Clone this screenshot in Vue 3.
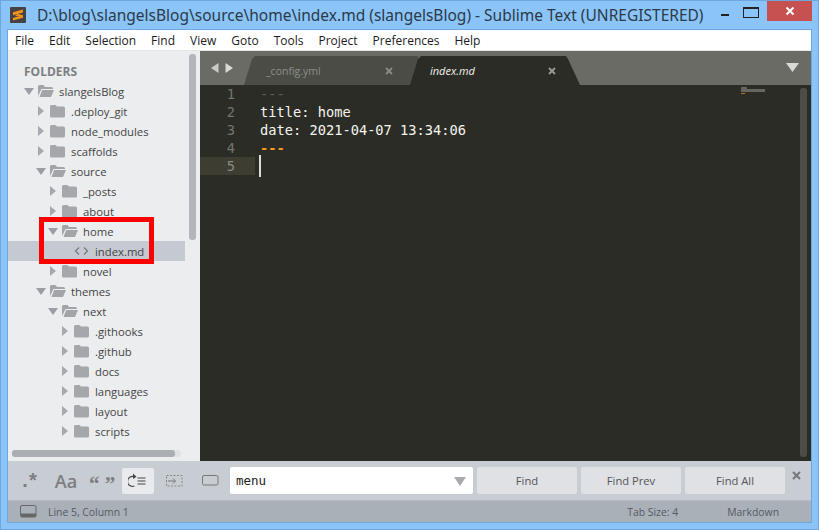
<script setup>
const menu = ['File', 'Edit', 'Selection', 'Find', 'View', 'Goto', 'Tools', 'Project', 'Preferences', 'Help']
const tree = [
  { name: 'slangelsBlog', d: 0, open: true },
  { name: '.deploy_git', d: 1 },
  { name: 'node_modules', d: 1 },
  { name: 'scaffolds', d: 1 },
  { name: 'source', d: 1, open: true },
  { name: '_posts', d: 2 },
  { name: 'about', d: 2 },
  { name: 'home', d: 2, open: true },
  { name: 'index.md', d: 3, file: true, selected: true },
  { name: 'novel', d: 2 },
  { name: 'themes', d: 1, open: true },
  { name: 'next', d: 2, open: true },
  { name: '.githooks', d: 3 },
  { name: '.github', d: 3 },
  { name: 'docs', d: 3 },
  { name: 'languages', d: 3 },
  { name: 'layout', d: 3 },
  { name: 'scripts', d: 3 }
]
const lines = [
  { n: 1, text: '---', cls: 'dim' },
  { n: 2, text: 'title: home', cls: '' },
  { n: 3, text: 'date: 2021-04-07 13:34:06', cls: '' },
  { n: 4, text: '---', cls: 'orange' },
  { n: 5, text: '', cls: '', active: true }
]
</script>

<template>
  <div class="window">
    <header class="titlebar">
      <svg class="logo" width="16" height="16" viewBox="0 0 16 16">
        <rect width="16" height="16" rx="1" fill="#444341" />
        <path d="M3 5.300 13 2.500v3L3 8.300zM3 8.200 13 10.800 3 13.500v-2.600l5-1.300-5-1.400zM8 7l5 1.300v2.500L5 8.500z" fill="#f5921e" />
      </svg>
      <span class="title">D:\blog\slangelsBlog\source\home\index.md (slangelsBlog) - Sublime Text (UNREGISTERED)</span>
      <div class="controls">
        <span class="min"></span>
        <span class="max"></span>
        <span class="close">
          <svg width="10" height="10" viewBox="0 0 10 10"><path d="M1.5 1.5l7 7M8.5 1.5l-7 7" stroke="#fff" stroke-width="2" /></svg>
        </span>
      </div>
    </header>
    <div class="client">
      <nav class="menu">
        <span v-for="m in menu" :key="m">{{ m }}</span>
      </nav>
      <div class="main">
        <aside class="sidebar">
          <div class="tree-pane">
            <div class="folders">FOLDERS</div>
            <div class="tree">
              <div
                v-for="(r, i) in tree"
                :key="i"
                class="row"
                :class="{ selected: r.selected }"
                :style="{ paddingLeft: 15 + r.d * 12 + 'px' }"
              >
                <template v-if="r.file">
                  <span class="arrow"></span>
                  <svg class="ficon" width="17" height="14" viewBox="0 0 17 14">
                    <path d="M6 3.5 2.5 7 6 10.500M11 3.500 14.500 7 11 10.500" fill="none" stroke="#777" stroke-width="1.200" />
                  </svg>
                </template>
                <template v-else>
                  <svg class="arrow" width="12" height="12" viewBox="0 0 12 12">
                    <path v-if="r.open" d="M1 3h10L6 10z" fill="#9a9da2" />
                    <path v-else d="M3 1l6 5-6 5z" fill="#a5a8ad" />
                  </svg>
                  <svg class="ficon" width="17" height="14" viewBox="0 0 17 14">
                    <template v-if="r.open">
                      <path d="M1 12V2.500Q1 1 2.500 1h4L8 3h6.500Q16 3 16 4.500V5H4.500L1 12z" fill="#a2a4a8" />
                      <path d="M2.500 13 5.200 6H17l-3 7z" fill="#a2a4a8" />
                    </template>
                    <path v-else d="M1 2.500Q1 1 2.500 1h4L8 2.500h6.500Q16 2.500 16 4v8q0 1.500-1.500 1.500h-12Q1 13.500 1 12z" fill="#a5a7ab" />
                  </svg>
                </template>
                <span class="name">{{ r.name }}</span>
              </div>
            </div>
            <div class="vscroll"></div>
            <div class="redbox"></div>
          </div>
          <div class="hscroll"><div class="hthumb"></div></div>
        </aside>
        <section class="editor">
          <div class="tabbar">
            <div class="arrows">
              <svg width="8" height="10" viewBox="0 0 8 10"><path d="M7.500 0v10L0 5z" fill="#c9c9c6" /></svg>
              <svg width="8" height="10" viewBox="0 0 8 10"><path d="M.5 0v10L8 5z" fill="#d8d8d5" /></svg>
            </div>
            <div class="tab inactive">
              <span>_config.yml</span>
              <svg width="8" height="8" viewBox="0 0 8 8"><path d="M1 1l6 6M7 1L1 7" stroke="#8a8b86" stroke-width="1.800" /></svg>
            </div>
            <div class="tab current">
              <span>index.md</span>
              <svg width="8" height="8" viewBox="0 0 8 8"><path d="M1 1l6 6M7 1L1 7" stroke="#9a9b96" stroke-width="1.800" /></svg>
            </div>
            <svg class="tabmenu" width="13" height="9" viewBox="0 0 13 9"><path d="M0 0h13L6.500 9z" fill="#d9d9d6" /></svg>
          </div>
          <div class="code">
            <div v-for="l in lines" :key="l.n" class="line">
              <span class="num" :class="{ active: l.active }">{{ l.n }}</span>
              <span class="txt" :class="l.cls">{{ l.text }}<i v-if="l.active" class="caret"></i></span>
            </div>
            <div class="minimap">
              <i class="m1"></i><i class="m2"></i><i class="m3"></i>
            </div>
            <div class="escroll"></div>
          </div>
        </section>
      </div>
      <div class="findbar">
        <div class="tools">
          <span class="tool regex">.*</span>
          <span class="tool case">Aa</span>
          <span class="tool quote">“ ”</span>
          <span class="tool on">
            <svg width="20" height="16" viewBox="0 0 20 16">
              <path d="M6.500 3.800A5 5 0 1 0 6.500 13" fill="none" stroke="#444" stroke-width="1.100" />
              <path d="M5 .5 8.500 3.800 5 6z" fill="#444" />
              <path d="M9.500 5h8M9.500 8h8M9.500 11h8" stroke="#444" stroke-width="1.100" />
            </svg>
          </span>
          <span class="tool">
            <svg width="18" height="12" viewBox="0 0 18 12">
              <rect x="1.500" y=".5" width="15.500" height="10.500" fill="none" stroke="#888" stroke-dasharray="2 1.500" />
              <path d="M3 6h7M8 3.500 10.500 6 8 8.500" fill="none" stroke="#777" />
            </svg>
          </span>
          <span class="tool">
            <svg width="17" height="11" viewBox="0 0 17 11"><rect x=".5" y=".5" width="15.500" height="9.500" rx="1.500" fill="none" stroke="#777" /></svg>
          </span>
        </div>
        <div class="input">
          <span>menu</span>
          <svg width="14" height="10" viewBox="0 0 14 10"><path d="M1 1h12L7 10z" fill="#a8aaae" /></svg>
        </div>
        <button class="btn">Find</button>
        <button class="btn">Find Prev</button>
        <button class="btn">Find All</button>
        <svg class="fclose" width="9" height="9" viewBox="0 0 9 9"><path d="M1 1l7 7M8 1L1 8" stroke="#777" stroke-width="2" /></svg>
      </div>
      <footer class="status">
        <svg width="17" height="13" viewBox="0 0 17 13">
          <rect x=".5" y=".5" width="15.500" height="11.500" rx="1.500" fill="none" stroke="#666" />
          <path d="M1 8.500h15V11q0 1-1 1H2q-1 0-1-1z" fill="#666" />
        </svg>
        <span class="pos">Line 5, Column 1</span>
        <span class="tabsize">Tab Size: 4</span>
        <span class="syntax">Markdown</span>
      </footer>
    </div>
  </div>
</template>

<style>
html, body { margin: 0; background: #8ac4f8; }
</style>

<style scoped>
.window {
  width: 819px;
  height: 530px;
  box-sizing: border-box;
  background: #8ac4f8;
  border: 1px solid #6fa6dc;
  display: flex;
  flex-direction: column;
  overflow: hidden;
  font-family: "Open Sans", "Noto Sans", sans-serif;
}
.titlebar {
  height: 29px;
  flex: none;
  display: flex;
  align-items: flex-start;
  padding-left: 9px;
  position: relative;
}
.logo { margin-top: 6px; }
.title {
  margin-left: 11px;
  margin-top: 4px;
  font-size: 15.530px;
  line-height: 20px;
  color: #2c3a48;
  white-space: nowrap;
  font-family: "Noto Sans", sans-serif;
}
.controls {
  margin-left: auto;
  margin-right: 6px;
  display: flex;
  align-items: flex-start;
}
.min { width: 8px; height: 2px; background: #222; margin-top: 13px; margin-right: 14px; }
.max { width: 14px; height: 8px; border: 1px solid #222; border-top-width: 2px; margin-top: 6px; margin-right: 8px; }
.close {
  width: 45px;
  height: 20px;
  background: #c75050;
  display: flex;
  align-items: center;
  justify-content: center;
}
.client {
  flex: none;
  margin: 0 7px;
  height: 492px;
  display: flex;
  flex-direction: column;
  background: #fff;
  outline: 1px solid #6fa6dc;
}
.menu {
  height: 20px;
  flex: none;
  display: flex;
  gap: 15px;
  align-items: center;
  padding-left: 7px;
  background: #fff;
  border-bottom: 1px solid #e6e6e6;
  font-size: 12px;
  color: #1b1b1b;
  font-family: "Open Sans", sans-serif;
}
.main { height: 410px; flex: none; display: flex; }
.sidebar {
  width: 192px;
  flex: none;
  background: #ebedef;
  display: flex;
  flex-direction: column;
  overflow: hidden;
  position: relative;
}
.tree-pane { flex: 1; min-height: 0; position: relative; overflow: hidden; }
.folders {
  margin: 11px 0 0 16px;
  height: 19px;
  line-height: 20px;
  font-size: 12px;
  font-weight: 700;
  color: #7d7f83;
}
.row {
  height: 20px;
  display: flex;
  align-items: center;
  font-size: 11.300px;
  color: #444;
  box-sizing: border-box;
  width: 177px;
  white-space: nowrap;
}
.row.selected { background: #c5c9d1; }
.arrow { width: 12px; height: 12px; flex: none; }
.ficon { margin-left: 2px; flex: none; }
.name { margin-left: 5px; }
.vscroll {
  position: absolute;
  left: 181px;
  top: 3px;
  width: 7px;
  height: 186px;
  border-radius: 3px;
  background: #b2b5ba;
}
.redbox {
  position: absolute;
  left: 31px;
  top: 166px;
  width: 105px;
  height: 37px;
  border: 5px solid #f00;
}
.hscroll {
  flex: none;
  height: 7px;
  margin: 0 19px 4px 4px;
  background: #e0e2e5;
  border-radius: 3px;
}
.hthumb { width: 163px; height: 7px; border-radius: 3px; background: #abaeb3; }
.editor { flex: 1; min-width: 0; display: flex; flex-direction: column; background: #2b2c25; }
.tabbar {
  height: 34px;
  flex: none;
  background: #6b6b65;
  display: flex;
  align-items: flex-end;
  position: relative;
}
.arrows {
  align-self: flex-start;
  display: flex;
  gap: 6px;
  margin: 12px 0 0 11px;
  width: 33px;
}
.tab {
  height: 29px;
  box-sizing: border-box;
  display: flex;
  align-items: center;
  justify-content: space-between;
}
.tab.inactive {
  width: 174px;
  background: #4b4c46;
  color: #8d8e89;
  font-size: 10.500px;
  padding: 0 25px 0 22px;
  clip-path: polygon(0 100%, 8px 3px, 11px 0, 100% 0, 100% 100%);
}
.tab.current {
  width: 170px;
  margin-left: -8px;
  background: #2b2c25;
  color: #f1f1ef;
  font-size: 11px;
  font-style: italic;
  padding: 0 24px 0 20px;
  clip-path: polygon(0 100%, 8px 3px, 11px 0, 156px 0, 158px 3px, 100% 100%);
}
.tabmenu { position: absolute; right: 12px; top: 12px; }
.code {
  flex: 1;
  min-height: 0;
  position: relative;
  font-family: "DejaVu Sans Mono", monospace;
  font-size: 13.700px;
}
.line { height: 18px; line-height: 18px; display: flex; white-space: pre; }
.num { width: 35px; box-sizing: border-box; text-align: right; color: #74756f; padding-right: 0; }
.txt { margin-left: 25px; color: #f5f5f0; position: relative; }
.num.active { width: 55px; padding-right: 20px; background: #3e3d32; color: #8b8b84; }
.num.active + .txt { margin-left: 5px; }
.dim { color: #5e5f59; }
.orange { color: #fd971f; font-weight: 700; }
.caret {
  position: absolute;
  left: -1px;
  top: -2px;
  width: 2px;
  height: 22px;
  background: #dcdcdc;
}
.minimap { position: absolute; left: 541px; top: 2px; width: 24px; height: 7px; }
.minimap i { display: block; background: #66665f; }
.minimap .m1 { width: 6px; height: 2px; }
.minimap .m2 { width: 24px; height: 3px; }
.minimap .m3 { width: 4px; height: 1px; background: #b5762a; margin-top: 1px; }
.escroll {
  position: absolute;
  left: 600px;
  top: 3px;
  width: 7px;
  height: 369px;
  border-radius: 3px;
  background: #4c4d47;
}
.findbar {
  height: 39px;
  flex: none;
  background: #c8ccd3;
  display: flex;
  align-items: center;
  position: relative;
  gap: 4px;
  box-sizing: border-box;
}
.tools { width: 218px; height: 26px; flex: none; display: flex; align-items: center; padding-left: 6px; box-sizing: border-box; }
.tool {
  width: 32px;
  height: 26px;
  margin-right: 4px;
  border-radius: 2px;
  display: flex;
  align-items: center;
  justify-content: center;
  color: #7c7e82;
  font-weight: 700;
  flex: none;
}
.tool.regex { font-size: 20px; letter-spacing: 1px; font-family: "Liberation Sans", sans-serif; }
.tool.case { font-size: 18px; font-weight: 600; font-family: "Open Sans", sans-serif; }
.tool.quote { font-size: 21px; line-height: 26px; padding-top: 7px; box-sizing: border-box; font-family: "Liberation Serif", serif; }
.tool.on { background: #e8eaed; }
.input {
  width: 243px;
  height: 27px;
  box-sizing: border-box;
  flex: none;
  background: #fff;
  border-radius: 2px;
  display: flex;
  align-items: center;
  justify-content: space-between;
  padding: 0 6px 0 6px;
  font-family: "DejaVu Sans Mono", monospace;
  font-size: 12.500px;
  color: #222;
}
.btn {
  width: 100px;
  height: 27px;
  flex: none;
  border: 0;
  padding: 0;
  border-radius: 2px;
  background: #dfe1e5;
  color: #555;
  font-family: "Open Sans", sans-serif;
  font-size: 11.200px;
}
.fclose { position: absolute; right: 10px; top: 10px; }
.status {
  height: 22px;
  flex: none;
  box-sizing: border-box;
  background: #a9b0b8;
  border-top: 1px solid #b5bbc2;
  display: flex;
  align-items: center;
  padding-left: 12px;
  font-size: 10.400px;
  color: #555b62;
}
.pos { margin-left: 11px; }
.tabsize { margin-left: auto; }
.syntax { margin-left: 49px; margin-right: 32px; }
</style>
